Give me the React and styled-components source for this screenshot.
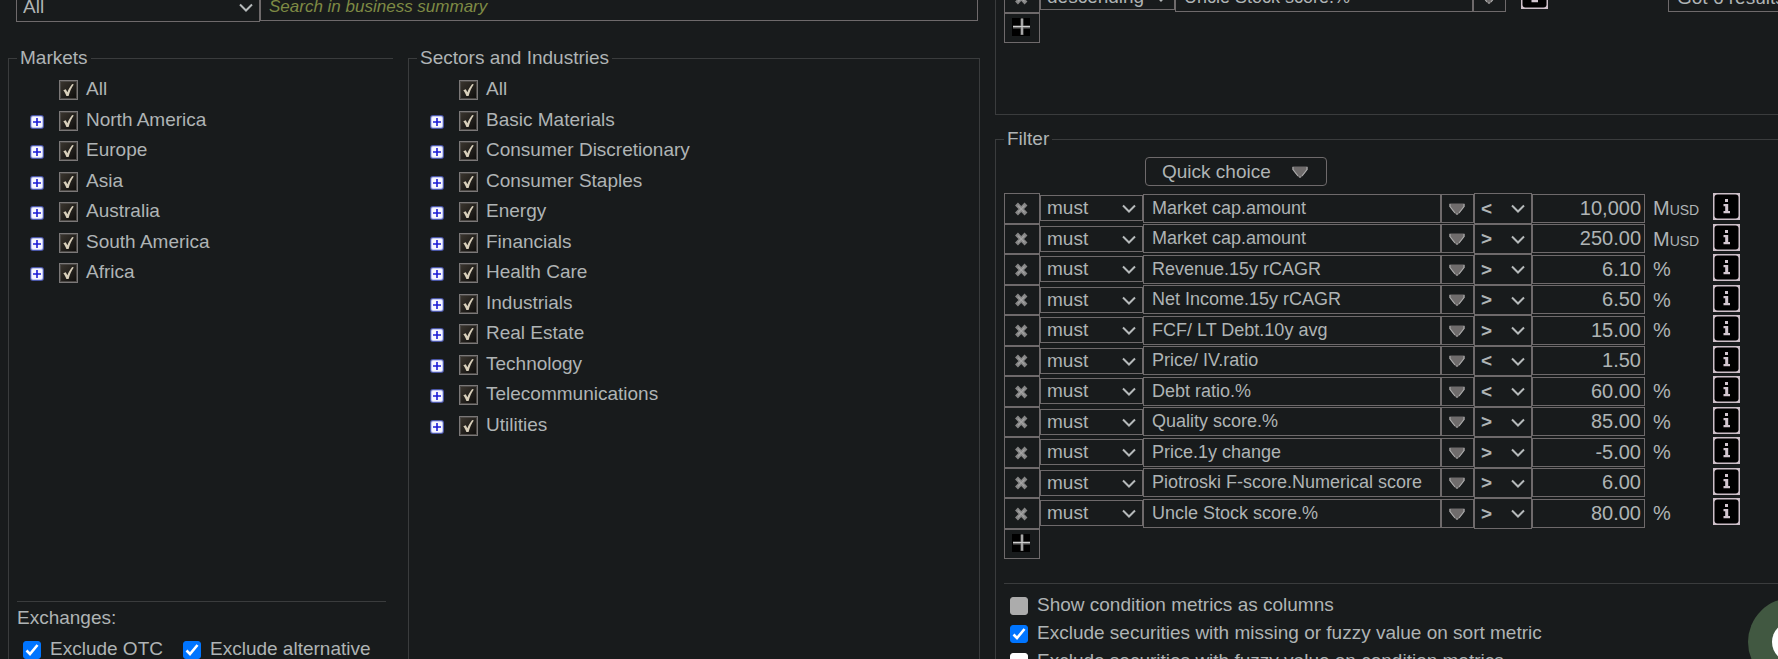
import React from "react";
import styled, { createGlobalStyle } from "styled-components";

const color = {
  page: "#181b1c",
  text: "#afb4b5",
  line: "#3a3c3d",
  control: "#6e6a6b",
  hint: "#7e8a44",
  accent: "#0075ff",
};

const GlobalStyle = createGlobalStyle`
  *, *::before, *::after { box-sizing: border-box; }
  body {
    margin: 0;
    background: ${color.page};
    color: ${color.text};
    font-family: "Liberation Sans", Arial, sans-serif;
    font-size: 19px;
    line-height: 22px;
  }
  button, input, select {
    font: inherit;
    color: inherit;
    margin: 0;
  }
`;

const Viewport = styled.div`
  height: 100vh;
  overflow: hidden;
`;

/* The page is shown scrolled down a little, so the first controls are cut. */
const Page = styled.main`
  display: grid;
  grid-template-columns: minmax(0, 972fr) minmax(0, 783fr);
  gap: 15px;
  min-height: calc(100vh + 64px);
  margin-top: -24px;
  padding-left: 8px;
`;

const Column = styled.div`
  display: flex;
  flex-direction: column;
  min-width: 0;
`;

const SettingsColumn = styled(Column)`
  margin-right: -40px;
`;

const Panel = styled.fieldset`
  min-width: 0;
  margin: 0;
  padding: ${(p) => p.$padding || "0"};
  border: 1px solid ${color.line};
  ${(p) => p.$open && "border-right: 0;"}
`;

const SortPanel = styled(Panel)`
  min-height: 139px;
  margin-bottom: 13px;
`;

const FilterPanel = styled(Panel)`
  flex: 1;
`;

const Legend = styled.legend`
  margin-left: ${(p) => p.$indent || 0}px;
  padding: 0 3px;
`;

/* Drop-down */
const SelectBox = styled.span`
  display: grid;
  flex: none;
  align-items: center;
  width: ${(p) => p.$width}px;
  height: ${(p) => p.$height}px;
  margin-top: ${(p) => p.$top || 0}px;
  > * { grid-area: 1 / 1; }
  > svg {
    justify-self: end;
    margin-right: 7px;
    pointer-events: none;
  }
`;

const SelectInput = styled.select`
  appearance: none;
  width: 100%;
  height: 100%;
  padding: 0 6px;
  border: 1px solid ${color.control};
  border-radius: 0;
  background: ${color.page};
  font-weight: ${(p) => (p.$strong ? 700 : 400)};
`;

function Select({ label, value, strong, ...box }) {
  return (
    <SelectBox {...box}>
      <SelectInput aria-label={label} defaultValue={value} $strong={strong}>
        <option>{value}</option>
      </SelectInput>
      <svg width="14" height="9" viewBox="0 0 14 9" aria-hidden="true">
        <path d="M1 1.5L7 7.5L13 1.5" fill="none" stroke="#b6babb" strokeWidth="2" />
      </svg>
    </SelectBox>
  );
}

/* Search row */
const SearchRow = styled.div`
  display: flex;
  align-items: flex-start;
  margin: 16px 2px 25px 8px;
`;

const SearchInput = styled.input`
  flex: 1;
  min-width: 0;
  height: 29px;
  padding: 0 8px;
  border: 1px solid ${color.control};
  background: ${color.page};
  font-size: 17px;
  &::placeholder {
    color: ${color.hint};
    font-style: italic;
    opacity: 1;
  }
`;

/* Trees */
const TreePanels = styled.div`
  display: grid;
  flex: 1;
  grid-template-columns: minmax(0, 385fr) minmax(0, 572fr);
  gap: 15px;
`;

const Tree = styled.ul`
  list-style: none;
  min-height: 528px;
  margin: 0;
  padding: 0;
`;

const TreeRow = styled.li`
  display: flex;
  align-items: center;
  height: 31px;
  padding-left: 20px;
  &:nth-child(odd):not(:first-child) { height: 30px; }
`;

const Expander = styled.button`
  width: 16px;
  height: 16px;
  margin: 4px 14px 0 0;
  padding: 0;
  border: 0;
  background: none;
  visibility: ${(p) => (p.$hidden ? "hidden" : "visible")};
  svg { display: block; }
`;

const TreeLabel = styled.label`
  display: flex;
  align-items: flex-end;
  gap: 8px;
`;

const TickBox = styled.span`
  display: grid;
  width: 19px;
  height: 20px;
  > * { grid-area: 1 / 1; }
  > svg { pointer-events: none; }
`;

const TickInput = styled.input`
  appearance: none;
  width: 19px;
  height: 20px;
  border: 1px solid #7b7878;
  background: linear-gradient(135deg, #3b362f, #0d0c0b);
  box-shadow: inset 0 0 0 1px #4a4744;
`;

function TreeItem({ name, leaf }) {
  return (
    <TreeRow>
      <Expander type="button" aria-label={`Expand ${name}`} $hidden={leaf}>
        <svg width="16" height="16" viewBox="0 0 16 16" aria-hidden="true">
          <rect x="1" y="1" width="14" height="14" rx="3" fill="#4a56a6" />
          <rect x="2" y="2" width="12" height="12" rx="2" fill="#c3c9f2" />
          <rect x="3" y="3" width="10" height="10" rx="1" fill="#f7f7ff" />
          <path d="M8 4V12M4 8H12" stroke="#1b1bd6" strokeWidth="1.6" />
        </svg>
      </Expander>
      <TreeLabel>
        <TickBox>
          <TickInput type="checkbox" defaultChecked />
          <svg width="19" height="20" viewBox="0 0 19 20" aria-hidden="true">
            <path d="M4.3 10.2L6.8 9.2L8.4 12.2C9.5 9.2 11.2 6.5 13.2 4L14.8 4.6C12.4 8 10.8 11.6 9.6 16H7.4C6.7 13.8 5.6 12 4.3 10.2Z" fill="#d9d0bb" />
          </svg>
        </TickBox>
        {name}
      </TreeLabel>
    </TreeRow>
  );
}

/* Plain tick boxes */
const OptionLabel = styled.label`
  display: flex;
  align-items: flex-start;
  gap: 9px;
  height: 28px;
  line-height: 26px;
`;

const OptionInput = styled.input`
  appearance: none;
  width: 18px;
  height: 18px;
  border: 1px solid ${(p) => p.$off || color.accent};
  border-radius: 3px;
  background: ${(p) => p.$off || color.accent};
`;

const OptionBox = styled(TickBox)`
  width: 18px;
  height: 18px;
  margin-top: 5px;
`;

function Option({ text, checked, off }) {
  return (
    <OptionLabel>
      <OptionBox>
        <OptionInput type="checkbox" defaultChecked={checked} $off={off} />
        {checked && (
          <svg width="18" height="18" viewBox="0 0 18 18" aria-hidden="true">
            <path d="M3.5 9.5L7 13L14.5 4" fill="none" stroke="#fff" strokeWidth="2.6" />
          </svg>
        )}
      </OptionBox>
      {text}
    </OptionLabel>
  );
}

const Exchanges = styled.section`
  margin: 0 7px 0 8px;
  padding-top: 5px;
  border-top: 1px solid ${color.line};
`;

const ExchangeOptions = styled.div`
  display: flex;
  gap: 20px;
  padding: 7px 0 0 6px;
`;

/* Condition rows */
const ConditionRow = styled.div`
  display: flex;
  align-items: flex-start;
  height: 31px;
  ${(p) => p.$tight && "height: 30px;"}
`;

const CellButton = styled.button`
  display: grid;
  flex: none;
  place-items: center;
  width: ${(p) => p.$width}px;
  height: ${(p) => p.$height || "100%"};
  margin-top: ${(p) => p.$top || 0}px;
  padding: 0;
  border: 1px solid ${color.control};
  background: none;
`;

const MetricInput = styled.input`
  flex: none;
  width: 298px;
  height: 29px;
  margin-top: ${(p) => p.$top || 0}px;
  padding: 0 8px;
  border: 1px solid ${color.control};
  background: none;
  font-size: 18px;
`;

const NumberInput = styled(MetricInput)`
  width: 113px;
  padding: 0 3px;
  font-size: 20px;
  text-align: right;
`;

const Unit = styled.span`
  flex: none;
  width: 68px;
  padding: 4px 0 0 8px;
  font-size: 20px;
  small { font-size: 14px; }
`;

const InfoButton = styled.button`
  flex: none;
  width: 27px;
  height: 27px;
  margin-left: ${(p) => p.$gap || 0}px;
  padding: 0;
  border: 0;
  background: none;
  svg { display: block; }
`;

const ResultBox = styled.output`
  flex: none;
  width: 240px;
  height: 29px;
  margin: 1px 0 0 120px;
  padding: 3px 8px;
  border: 1px solid ${color.control};
`;

const QuickChoice = styled.button`
  display: flex;
  align-items: center;
  justify-content: space-between;
  width: 182px;
  height: 29px;
  margin: 0 0 7px 141px;
  padding: 0 16px;
  border: 1px solid ${color.control};
  border-radius: 4px;
  background: none;
`;

const FilterOptions = styled.div`
  margin-top: 24px;
  padding: 8px 0 0 6px;
  border-top: 1px solid ${color.line};
`;

const ChatButton = styled.button`
  position: fixed;
  right: -58px;
  bottom: -27px;
  display: grid;
  place-items: center;
  width: 88px;
  height: 88px;
  padding: 0;
  border: 0;
  border-radius: 50%;
  background: #415841;
`;

function RemoveButton() {
  return (
    <CellButton type="button" aria-label="Remove" $width={36}>
      <svg width="16" height="14" viewBox="0 0 16 14" aria-hidden="true">
        <path d="M2.5 2L12 12M12 2L2.5 12" stroke="#868686" strokeWidth="4" />
        <path d="M4 3.6L10.5 10.4M10.5 3.6L4 10.4" stroke="#a5a5a5" strokeWidth="1.2" />
      </svg>
    </CellButton>
  );
}

function AddButton() {
  return (
    <CellButton type="button" aria-label="Add" $width={36} $height="30px">
      <svg width="20" height="20" viewBox="0 0 20 20" aria-hidden="true">
        <rect width="18" height="18" fill="#000" />
        <path d="M10 0.5V17M1 9H18" stroke="#6d6d6d" strokeWidth="3" />
        <path d="M10 0.5V16.5M1 8.5H18" stroke="#cfcfcf" strokeWidth="1.2" />
      </svg>
    </CellButton>
  );
}

function Triangle() {
  return (
    <svg width="18" height="12" viewBox="0 0 18 12" aria-hidden="true">
      <path d="M0.5 0.5H15.5V3.5L10.5 10L9 11.5H7L5.5 10L0.5 3.5Z" fill="#6f6c6c" />
      <path d="M1 1V3.5L6 10M15 1V3.5L10 10M7 11H9" fill="none" stroke="#a9a9a9" strokeWidth="1.2" />
    </svg>
  );
}

function Info({ gap }) {
  return (
    <InfoButton type="button" aria-label="Information" $gap={gap}>
      <svg width="27" height="27" viewBox="0 0 27 27" aria-hidden="true">
        <rect width="27" height="27" fill="#cdbfc8" />
        <rect x="1.5" y="1.5" width="24" height="24" rx="3" fill="#000" />
        <path d="M12 6H15V9H12ZM10.5 11H15.2V18H17V20.3H10.5V18H12.2V13.2H10.5Z" fill="#d2c6cf" />
      </svg>
    </InfoButton>
  );
}

function PickButton({ width, top }) {
  return (
    <CellButton type="button" aria-label="Choose metric" $width={width} $height="29px" $top={top}>
      <Triangle />
    </CellButton>
  );
}

const markets = ["North America", "Europe", "Asia", "Australia", "South America", "Africa"];

const sectors = [
  "Basic Materials",
  "Consumer Discretionary",
  "Consumer Staples",
  "Energy",
  "Financials",
  "Health Care",
  "Industrials",
  "Real Estate",
  "Technology",
  "Telecommunications",
  "Utilities",
];

const conditions = [
  ["Market cap.amount", "<", "10,000", "M"],
  ["Market cap.amount", ">", "250.00", "M"],
  ["Revenue.15y rCAGR", ">", "6.10", "%"],
  ["Net Income.15y rCAGR", ">", "6.50", "%"],
  ["FCF/ LT Debt.10y avg", ">", "15.00", "%"],
  ["Price/ IV.ratio", "<", "1.50", ""],
  ["Debt ratio.%", "<", "60.00", "%"],
  ["Quality score.%", ">", "85.00", "%"],
  ["Price.1y change", ">", "-5.00", "%"],
  ["Piotroski F-score.Numerical score", ">", "6.00", ""],
  ["Uncle Stock score.%", ">", "80.00", "%"],
];

export default function App() {
  return (
    <Viewport>
      <GlobalStyle />
      <Page>
        <Column>
          <SearchRow>
            <Select label="Scope" value="All" $width={244} $height={30} />
            <SearchInput aria-label="Search" placeholder="Search in business summary" />
          </SearchRow>
          <TreePanels>
            <Panel $open $padding="4px 0 0">
              <Legend $indent={8}>Markets</Legend>
              <Tree>
                <TreeItem name="All" leaf />
                {markets.map((name) => <TreeItem key={name} name={name} />)}
              </Tree>
              <Exchanges>
                Exchanges:
                <ExchangeOptions>
                  <Option text="Exclude OTC" checked />
                  <Option text="Exclude alternative" checked />
                </ExchangeOptions>
              </Exchanges>
            </Panel>
            <Panel $padding="4px 0 0">
              <Legend $indent={8}>Sectors and Industries</Legend>
              <Tree>
                <TreeItem name="All" leaf />
                {sectors.map((name) => <TreeItem key={name} name={name} />)}
              </Tree>
            </Panel>
          </TreePanels>
        </Column>

        <SettingsColumn>
          <SortPanel $open $padding="5px 0 0 8px">
            <ConditionRow>
              <RemoveButton />
              <Select label="Sort order" value="descending" $width={135} $height={26} $top={2} />
              <MetricInput aria-label="Sort metric" defaultValue="Uncle Stock score.%" $top={1} />
              <PickButton width={33} top={1} />
              <Info gap={15} />
              <ResultBox>Got 6 results</ResultBox>
            </ConditionRow>
            <AddButton />
          </SortPanel>

          <FilterPanel $open $padding="7px 0 0 8px">
            <Legend>Filter</Legend>
            <QuickChoice type="button">
              Quick choice
              <Triangle />
            </QuickChoice>
            {conditions.map(([metric, op, value, unit], i) => {
              const tight = i % 2 === 1;
              const top = tight ? 0 : 1;
              return (
                <ConditionRow key={i} $tight={tight}>
                  <RemoveButton />
                  <Select label="Requirement" value="must" $width={103} $height={26} $top={2} />
                  <MetricInput aria-label="Metric" defaultValue={metric} $top={top} />
                  <PickButton width={33} top={top} />
                  <Select label="Operator" value={op} strong $width={58} $height={tight ? 30 : 31} />
                  <NumberInput aria-label="Value" defaultValue={value} $top={top} />
                  <Unit>
                    {unit}
                    {unit === "M" && <small>USD</small>}
                  </Unit>
                  <Info />
                </ConditionRow>
              );
            })}
            <AddButton />
            <FilterOptions>
              <Option text="Show condition metrics as columns" off="#acacac" />
              <Option text="Exclude securities with missing or fuzzy value on sort metric" checked />
              <Option text="Exclude securities with fuzzy value on condition metrics" off="#ffffff" />
            </FilterOptions>
          </FilterPanel>
        </SettingsColumn>
      </Page>
      <ChatButton type="button" aria-label="Open chat">
        <svg width="40" height="40" viewBox="0 0 40 40" aria-hidden="true">
          <circle cx="20" cy="20" r="20" fill="#fff" />
        </svg>
      </ChatButton>
    </Viewport>
  );
}
